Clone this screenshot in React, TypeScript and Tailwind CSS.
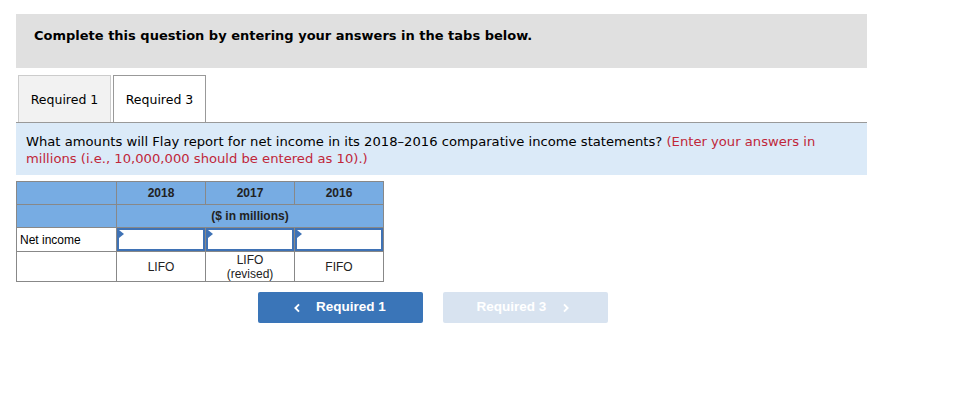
import React from 'react'

function AnswerCell() {
  return (
    <td className="border border-[#888] p-0">
      <div className="relative h-[23px] border-2 border-[#3f72b5] bg-white">
        <span className="absolute left-0 top-0 h-0 w-0 border-y-[4px] border-l-[5px] border-y-transparent border-l-[#3f72b5]" />
      </div>
    </td>
  )
}

export default function App() {
  return (
    <div className="w-[974px] h-[410px] bg-white pt-[14px] pl-4 font-['DejaVu_Sans',Verdana,sans-serif] text-black">
      <div className="w-[851px]">
        <div className="h-[54px] bg-[#e0e0e0] pl-[18px] pt-[14px] text-[13px] font-bold leading-[16px]">
          Complete this question by entering your answers in the tabs below.
        </div>

        <div className="mt-[7px] flex h-[48px] items-end gap-[2px] border-b border-[#999] pl-[2px] text-[12.5px]">
          <div className="flex h-[47px] w-[93px] items-center justify-center border border-b-0 border-[#ccc] bg-[#f2f2f2] pt-[2px]">
            Required 1
          </div>
          <div className="flex h-[47px] w-[93px] items-center justify-center border border-b-0 border-[#999] bg-white pt-[2px]">
            Required 3
          </div>
        </div>

        <div className="h-[52px] bg-[#dbeaf8] pl-[10px] pr-[40px] pt-[10px] text-[13.15px] leading-[17px]">
          What amounts will Flay report for net income in its 2018–2016 comparative income statements?{' '}
          <span className="text-[#c0273a]">(Enter your answers in millions (i.e., 10,000,000 should be entered as 10).)</span>
        </div>

        <table className="mt-[6px] w-[368px] table-fixed border-collapse border border-[#888] font-['Liberation_Sans',Arial,sans-serif] text-[12px]">
          <colgroup>
            <col className="w-[100px]" />
            <col className="w-[89px]" />
            <col className="w-[89px]" />
            <col className="w-[89px]" />
          </colgroup>
          <tbody>
            <tr className="h-[23px] bg-[#77ace3] font-bold text-[#222]">
              <td className="border border-[#888]" />
              <td className="border border-[#888] text-center">2018</td>
              <td className="border border-[#888] text-center">2017</td>
              <td className="border border-[#888] text-center">2016</td>
            </tr>
            <tr className="h-[23px] bg-[#77ace3] font-bold text-[#222]">
              <td className="border border-[#888]" />
              <td colSpan={3} className="border border-[#888] text-center">
                ($ in millions)
              </td>
            </tr>
            <tr className="h-[24px]">
              <td className="border border-[#888] pl-[3px]">Net income</td>
              <AnswerCell />
              <AnswerCell />
              <AnswerCell />
            </tr>
            <tr className="h-[30px] text-[#222]">
              <td className="border border-[#888]" />
              <td className="border border-[#888] text-center">LIFO</td>
              <td className="border border-[#888] text-center leading-[14px]">
                LIFO
                <br />
                (revised)
              </td>
              <td className="border border-[#888] text-center">FIFO</td>
            </tr>
          </tbody>
        </table>

        <div className="mt-[10px] flex gap-[20px] pl-[242px] font-['Liberation_Sans',Arial,sans-serif] text-[13.5px] font-bold text-white">
          <button className="flex h-[31px] w-[165px] items-center justify-center gap-[15px] rounded-[2px] bg-[#3a75b8] pr-[2px]">
            <svg viewBox="0 0 10 12" className="h-[12px] w-[8px]" fill="none" stroke="currentColor" strokeWidth="2.4">
              <path d="M7.5 1.5 3 6l4.5 4.5" />
            </svg>
            Required 1
          </button>
          <button className="flex h-[31px] w-[165px] items-center justify-center gap-[16px] rounded-[2px] bg-[#d8e3f0] pr-[4px]">
            Required 3
            <svg viewBox="0 0 10 12" className="h-[12px] w-[8px]" fill="none" stroke="currentColor" strokeWidth="2.4">
              <path d="M2.5 1.5 7 6l-4.5 4.5" />
            </svg>
          </button>
        </div>
      </div>
    </div>
  )
}
